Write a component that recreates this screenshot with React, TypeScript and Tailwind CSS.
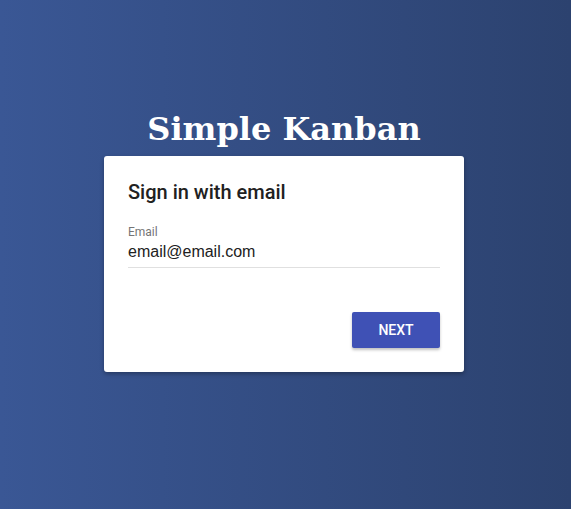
export default function App() {
  return (
    <div className="min-h-screen w-full bg-gradient-to-r from-[#3a5795] to-[#2c426f] flex flex-col items-center pt-[109px] pr-[3px]">
      <h1 className="text-white text-[32px] leading-[40px] font-bold font-['DejaVu_Serif',serif] mb-[7px]">
        Simple Kanban
      </h1>
      <div className="w-[360px] bg-white rounded-[3px] shadow-[0_2px_4px_rgba(0,0,0,0.3)] font-['Roboto',sans-serif] px-6 pt-[22px] pb-6">
        <h2 className="text-[20px] leading-7 font-medium text-[#212121]">Sign in with email</h2>
        <div className="mt-[18px]">
          <div className="text-[12px] leading-4 text-[#757575]">Email</div>
          <div className="text-[16px] leading-6 text-[#212121] font-['Liberation_Sans',sans-serif] border-b border-[#e0e0e0] pb-[3px]">
            email@email.com
          </div>
        </div>
        <div className="flex justify-end mt-[44px]">
          <button className="w-[88px] h-9 rounded-[2px] bg-[#3f51b5] text-white text-[14px] font-medium uppercase shadow-[0_2px_3px_rgba(0,0,0,0.25)]">
            Next
          </button>
        </div>
      </div>
    </div>
  );
}
